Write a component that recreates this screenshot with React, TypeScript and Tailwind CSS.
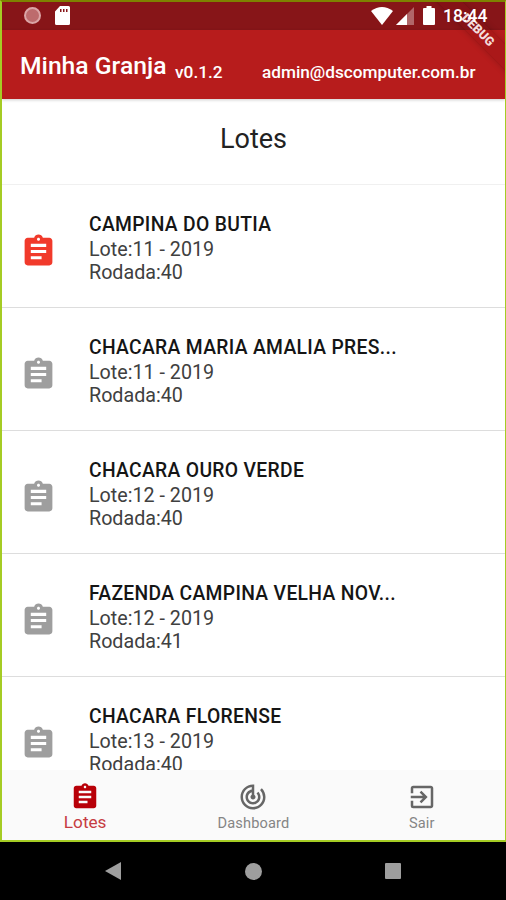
import { MdAssignment, MdExitToApp, MdTrackChanges } from "react-icons/md";

const lotes = [
  { nome: "CAMPINA DO BUTIA", lote: "11 - 2019", rodada: 40, ativo: true },
  { nome: "CHACARA MARIA AMALIA PRES...", lote: "11 - 2019", rodada: 40 },
  { nome: "CHACARA OURO VERDE", lote: "12 - 2019", rodada: 40 },
  { nome: "FAZENDA CAMPINA VELHA NOV...", lote: "12 - 2019", rodada: 41 },
  { nome: "CHACARA FLORENSE", lote: "13 - 2019", rodada: 40 },
];

function StatusBar() {
  return (
    <div className="flex h-[28px] shrink-0 items-center bg-[#871518] pr-[17px] pb-[1px] pl-[22px] text-white">
      <div className="size-[17px] rounded-full border-2 border-[#dba5a6] bg-[#bd6b6d]" />
      <svg className="ml-[14px] h-[19px] w-[15px]" viewBox="0 0 15 19" fill="currentColor">
        <path
          fillRule="evenodd"
          d="M5 0h8.500a1.500 1.500 0 0 1 1.500 1.500v16a1.500 1.500 0 0 1-1.500 1.500H1.500A1.500 1.500 0 0 1 0 17.500V5.500zM5 3v3h1.500V3zm3 0v3h1.500V3zm3 0v3h1.500V3z"
        />
      </svg>
      <svg className="ml-auto h-[18px] w-[22px]" viewBox="0 0 22 18" fill="currentColor">
        <path d="M0 4Q11-4 22 4L11 18z" />
      </svg>
      <svg className="ml-[3px] h-[18px] w-[18px]" viewBox="0 0 18 18" fill="currentColor">
        <path d="M0 18L18 0v18z" opacity=".35" />
        <path d="M0 18L11 7v11z" />
      </svg>
      <svg className="ml-[9px] h-[19px] w-[12px]" viewBox="0 0 12 19" fill="currentColor">
        <path d="M3.500 0h5v2H11a1 1 0 0 1 1 1v15a1 1 0 0 1-1 1H1a1 1 0 0 1-1-1V3a1 1 0 0 1 1-1h2.500z" />
      </svg>
      <span className="relative top-[1px] z-10 ml-[8px] w-[45px] text-[17.5px] leading-none font-medium whitespace-nowrap">
        18:44
      </span>
    </div>
  );
}

function Header() {
  return (
    <header className="flex h-[69px] shrink-0 items-baseline bg-[#b71c1c] pt-[19px] pl-[18px] font-medium text-white shadow-[0_1px_3px_rgba(0,0,0,0.2)]">
      <h1 className="w-[155px] text-[24.7px] leading-[34px] font-medium whitespace-nowrap">Minha Granja</h1>
      <span className="relative top-[4px] w-[87px] text-[17.3px]">v0.1.2</span>
      <span className="relative top-[4px] text-[17.2px]">admin@dscomputer.com.br</span>
    </header>
  );
}

function NavItem({ icon: Icon, label, active }: { icon: typeof MdAssignment; label: string; active?: boolean }) {
  return (
    <div className={`flex flex-1 flex-col items-center pt-[12px] ${active ? "text-[#b80008]" : "text-[#666]"}`}>
      <Icon className="size-[30px]" />
      <span
        className={
          active
            ? "text-[17.2px] leading-[21px] text-[#c63c42]"
            : "text-[14.6px] leading-[22px] tracking-[0.15px] text-[#858585]"
        }
      >
        {label}
      </span>
    </div>
  );
}

export default function App() {
  return (
    <div className="flex h-[900px] w-[506px] flex-col overflow-hidden bg-black font-[Roboto,sans-serif]">
      <div className="relative flex h-[842px] shrink-0 flex-col overflow-hidden border-2 border-r border-[#a5cc24] border-t-[#7e8200] bg-white">
        <StatusBar />
        <Header />

        {/* debug ribbon across the corner */}
        <div className="absolute -top-[4px] -right-[43px] flex h-[18px] w-[140px] translate-y-[23px] rotate-45 items-center justify-center bg-[#7a0c10]/20 text-[12.5px] font-black text-[#f4dcdc] shadow-[0_0_6px_rgba(0,0,0,0.2)]">
          DEBUG
        </div>

        <main className="min-h-0 flex-1 overflow-hidden">
          <h2 className="flex h-[86px] items-center justify-center border-b border-[#f0f0f0] pb-[4px] text-[27px] text-[#222]">
            Lotes
          </h2>
          {lotes.map((item) => (
            <div key={item.nome} className="flex h-[123px] items-start border-b border-[#ddd] pl-[18px]">
              <MdAssignment
                className={`mt-[48px] size-[37px] shrink-0 ${item.ativo ? "text-[#f13a2b]" : "text-[#9e9e9e]"}`}
              />
              <div className="pt-[28px] pl-[32px] text-[19.7px] leading-[23.5px] whitespace-nowrap text-[#404040]">
                <div className="h-[24.5px] text-[19.3px] leading-[23px] font-medium tracking-[0.33px] text-[#151515]">
                  {item.nome}
                </div>
                <div>Lote:{item.lote}</div>
                <div>Rodada:{item.rodada}</div>
              </div>
            </div>
          ))}
        </main>

        <nav className="-mr-[1px] -ml-[1px] flex h-[70px] shrink-0 bg-[#fafafa]">
          <NavItem icon={MdAssignment} label="Lotes" active />
          <NavItem icon={MdTrackChanges} label="Dashboard" />
          <NavItem icon={MdExitToApp} label="Sair" />
        </nav>
      </div>

      <div className="flex flex-1 items-center justify-between pr-[105px] pl-[105px]">
        <svg className="h-[18px] w-[16px]" viewBox="0 0 16 18" fill="#9e9e9e">
          <path d="M16 0v18L0 9z" />
        </svg>
        <div className="size-[17px] rounded-full bg-[#9e9e9e]" />
        <div className="size-[16px] rounded-[1px] bg-[#9e9e9e]" />
      </div>
    </div>
  );
}
